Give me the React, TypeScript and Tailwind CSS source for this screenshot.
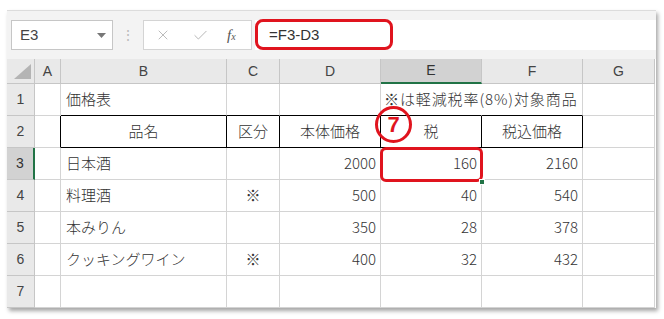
import React from 'react';
import { X, Check } from 'lucide-react';

const COLS = ['A', 'B', 'C', 'D', 'E', 'F', 'G'];

type Align = 'l' | 'c' | 'r';
interface CellDef {
  text?: string;
  align?: Align;
  wide?: boolean;
}

// row data, columns A..G
const ROWS: CellDef[][] = [
  [{}, { text: '価格表' }, {}, {}, { text: '※は軽減税率(8%)対象商品', wide: true }, {}, {}],
  [{}, { text: '品名', align: 'c' }, { text: '区分', align: 'c' }, { text: '本体価格', align: 'c' }, { text: '税', align: 'c' }, { text: '税込価格', align: 'c' }, {}],
  [{}, { text: '日本酒' }, {}, { text: '2000', align: 'r' }, { text: '160', align: 'r' }, { text: '2160', align: 'r' }, {}],
  [{}, { text: '料理酒' }, { text: '※', align: 'c' }, { text: '500', align: 'r' }, { text: '40', align: 'r' }, { text: '540', align: 'r' }, {}],
  [{}, { text: '本みりん' }, {}, { text: '350', align: 'r' }, { text: '28', align: 'r' }, { text: '378', align: 'r' }, {}],
  [{}, { text: 'クッキングワイン' }, { text: '※', align: 'c' }, { text: '400', align: 'r' }, { text: '32', align: 'r' }, { text: '432', align: 'r' }, {}],
  [{}, {}, {}, {}, {}, {}, {}],
];

const alignCls = (a?: Align) =>
  a === 'c' ? 'justify-center' : a === 'r' ? 'justify-end pr-[4px]' : 'justify-start pl-[5px]';

const cellBorder = (r: number, c: number) => {
  // r: 0-based row index, c: 0-based col index (A=0)
  let right = 'border-r-[#d4d4d4]';
  let bottom = 'border-b-[#d4d4d4]';
  if (r === 0 && c >= 1 && c <= 5) bottom = 'border-b-black';
  if (r === 0 && c === 4) right = 'border-r-transparent';
  if (r === 1 && c === 0) right = 'border-r-black';
  if (r === 1 && c >= 1 && c <= 5) {
    right = 'border-r-black';
    bottom = 'border-b-black';
  }
  return `${right} ${bottom}`;
};

export default function App() {
  return (
    <div className="w-[664px] h-[319px] bg-white pt-[10px] pl-[7px] overflow-hidden font-['Liberation_Sans','Noto_Sans_CJK_JP',sans-serif] text-[#333]">
      <div className="w-[649px] shadow-[2px_3px_4px_rgba(0,0,0,0.35)] bg-white">
        {/* formula bar */}
        <div className="h-[49px] bg-[#f3f3f3] border-t border-[#dcdcdc] flex items-center pl-[4px]">
          <div className="w-[102px] h-[30px] bg-white border border-[#c6c6c6] flex items-center justify-between pl-[8px] pr-[6px]">
            <span className="text-[15px] text-[#444]">E3</span>
            <svg width="9" height="5" viewBox="0 0 9 5">
              <path d="M0 0 L9 0 L4.5 5 Z" fill="#777" />
            </svg>
          </div>
          <div className="w-[30px] flex justify-center text-[#bbb] text-[14px]">⋮</div>
          <div className="w-[109px] h-[30px] bg-white border border-[#d4d4d4] flex items-center pl-[11px]">
            <X size={16} strokeWidth={1.3} className="text-[#b0b0b0]" />
            <Check size={17} strokeWidth={1.3} className="text-[#b0b0b0] ml-[21px]" />
            <span className="ml-[18px] font-['Liberation_Serif',serif] italic text-[15px] text-[#555] leading-none">
              f<span className="text-[10px]">x</span>
            </span>
          </div>
          <div className="relative flex-1 h-[30px] bg-white ml-[3px] flex items-center pl-[14px]">
            <span className="text-[15px] text-[#333]">=F3-D3</span>
            <div className="absolute left-0 top-[-1px] w-[138px] h-[31px] border-[3px] border-[#e0141e] rounded-[8px]" />
          </div>
        </div>

        {/* grid */}
        <div className="relative grid grid-cols-[28px_26px_166px_53px_101px_101px_101px_72px] grid-rows-[25px_repeat(7,32px)]">
          {/* header row */}
          <div className="bg-[#e9e9e9] border-r border-b border-[#c6c6c6] flex items-end justify-end pr-[3px] pb-[4px]">
            <svg width="17" height="15" viewBox="0 0 17 15">
              <path d="M17 0 L17 15 L0 15 Z" fill="#b4b4b4" />
            </svg>
          </div>
          {COLS.map((c) =>
            c === 'E' ? (
              <div key={c} className="bg-[#d2d2d2] border-r border-r-[#c6c6c6] border-b-2 border-b-[#217346] flex items-center justify-center text-[14px] text-[#333]">
                {c}
              </div>
            ) : (
              <div key={c} className="bg-[#e9e9e9] border-r border-b border-[#c6c6c6] flex items-center justify-center text-[14px] text-[#444]">
                {c}
              </div>
            )
          )}

          {ROWS.map((row, r) => (
            <React.Fragment key={r}>
              {r === 2 ? (
                <div className="bg-[#d2d2d2] border-r-2 border-r-[#217346] border-b border-b-[#c6c6c6] flex items-center justify-center text-[14px] text-[#333]">
                  {r + 1}
                </div>
              ) : (
                <div className="bg-[#e9e9e9] border-r border-b border-[#c6c6c6] flex items-center justify-center text-[14px] text-[#444]">
                  {r + 1}
                </div>
              )}
              {row.map((cell, c) => (
                <div
                  key={c}
                  className={`border-r border-b ${cellBorder(r, c)} flex items-center whitespace-nowrap overflow-visible font-['Noto_Sans_CJK_JP',sans-serif] font-light text-[15px] text-[#333] ${alignCls(cell.align)}`}
                >
                  {cell.wide ? <span className="tracking-[0.9px] -ml-[2px]">{cell.text}</span> : cell.text}
                </div>
              ))}
            </React.Fragment>
          ))}

          {/* annotations */}
          <div className="absolute left-[373px] top-[88px] w-[103px] h-[35px] border-[3px] border-[#e0141e] rounded-[6px]" />
          <div className="absolute left-[472px] top-[120px] w-[6px] h-[6px] bg-[#217346] border border-white" />
          <div className="absolute left-[368px] top-[47px] w-[37px] h-[37px] rounded-full border-[3px] border-[#e0141e] flex items-center justify-center">
            <span className="text-[#e0141e] text-[22px] font-bold leading-none font-['Liberation_Sans',sans-serif]">7</span>
          </div>
        </div>
      </div>
    </div>
  );
}
